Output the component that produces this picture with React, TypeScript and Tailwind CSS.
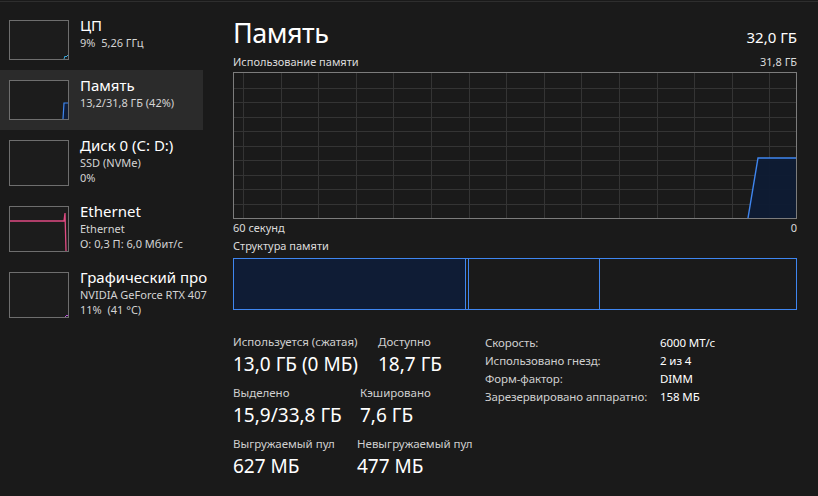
import React from 'react';

type Item = {
  title: string;
  lines: string[];
  graph: 'cpu' | 'mem' | 'disk' | 'eth' | 'gpu';
  active?: boolean;
};

const items: Item[] = [
  { title: 'ЦП', lines: ['9%  5,26 ГГц'], graph: 'cpu' },
  { title: 'Память', lines: ['13,2/31,8 ГБ (42%)'], graph: 'mem', active: true },
  { title: 'Диск 0 (C: D:)', lines: ['SSD (NVMe)', '0%'], graph: 'disk' },
  { title: 'Ethernet', lines: ['Ethernet', 'О: 0,3 П: 6,0 Мбит/с'], graph: 'eth' },
  { title: 'Графический про', lines: ['NVIDIA GeForce RTX 4070', '11%  (41 °C)'], graph: 'gpu' },
];

function MiniGraph({ kind, h }: { kind: Item['graph']; h: number }) {
  const ih = h - 2;
  return (
    <svg width="58" height={ih} className="block">
      {kind === 'cpu' && (
        <polyline points={`54,${ih} 55,${ih - 3} 56,${ih - 2} 58,${ih - 4}`} fill="none" stroke="#3aa6d8" strokeWidth="1" />
      )}
      {kind === 'mem' && (
        <>
          <polygon points={`53,${ih} 54,22 58,22 58,${ih}`} fill="#0f1d38" />
          <polyline points={`53,${ih} 54,22 58,22`} fill="none" stroke="#3f86f0" strokeWidth="1.2" />
        </>
      )}
      {kind === 'eth' && (
        <polyline points={`0,14 54,14 55,6 56,${ih}`} fill="none" stroke="#e04a82" strokeWidth="1.3" />
      )}
      {kind === 'gpu' && (
        <polyline points={`55,${ih} 57,${ih - 2} 58,${ih - 1}`} fill="none" stroke="#b555d6" strokeWidth="1" />
      )}
    </svg>
  );
}

function SideItem({ item }: { item: Item }) {
  const tall = item.lines.length > 1;
  return (
    <div
      className={`flex w-[203px] pl-[9px] py-[10px] gap-[11px] ${item.active ? 'bg-[#2b2b2b]' : ''}`}
    >
      <div
        className={`shrink-0 w-[60px] ${tall ? 'h-[46px]' : 'h-[40px]'} border border-[#6e6e6e] bg-[#1c1c1c]`}
      >
        <MiniGraph kind={item.graph} h={tall ? 46 : 40} />
      </div>
      <div className="-mt-[4px] whitespace-nowrap">
        <div className="text-[15px] leading-[19px] text-white">{item.title}</div>
        {item.lines.map((l) => (
          <div key={l} className="text-[11px] leading-[15px] text-[#d4d4d4] whitespace-pre">
            {l}
          </div>
        ))}
      </div>
    </div>
  );
}

function UsageGraph() {
  const w = 562;
  const h = 145;
  const cols = Array.from({ length: 15 }, (_, i) => 9 + i * 37.6);
  const rows = Array.from({ length: 9 }, (_, i) => 14.5 + i * 14.5);
  return (
    <div className="border border-[#7c7c7c] h-[147px]">
      <svg width={w} height={h} className="block">
        {cols.map((x) => (
          <line key={x} x1={Math.round(x) + 0.5} x2={Math.round(x) + 0.5} y1="0" y2={h} stroke="#343434" />
        ))}
        {rows.map((y) => (
          <line key={y} y1={Math.round(y) + 0.5} y2={Math.round(y) + 0.5} x1="0" x2={w} stroke="#343434" />
        ))}
        <polygon points={`514,${h} 524,85 ${w},85 ${w},${h}`} fill="#0e1b34" fillOpacity="0.95" />
        <polyline points={`514,${h} 524,85 ${w},85`} fill="none" stroke="#3f86f0" strokeWidth="1.4" />
      </svg>
    </div>
  );
}

function Stat({ label, value, w }: { label: string; value: string; w?: string }) {
  return (
    <div className={`whitespace-nowrap ${w ?? ''}`}>
      <div className="text-[11.5px] leading-[16px] text-[#cfcfcf]">{label}</div>
      <div className="mt-px text-[19px] leading-[26px] text-white">{value}</div>
    </div>
  );
}

const specs = [
  ['Скорость:', '6000 МТ/с'],
  ['Использовано гнезд:', '2 из 4'],
  ['Форм-фактор:', 'DIMM'],
  ['Зарезервировано аппаратно:', '158 МБ'],
];

export default function App() {
  return (
    <div className="w-[818px] h-[496px] overflow-hidden bg-[#1a1a1a] text-white [font-family:'Noto_Sans','DejaVu_Sans',sans-serif]">
      <div className="h-[2px] border-b border-[#2e2e2e]" />
      <div className="flex">
        {/* Sidebar */}
        <div className="w-[207px] shrink-0 overflow-hidden pt-[8px]">
          {items.map((it) => (
            <SideItem key={it.title} item={it} />
          ))}
        </div>

        {/* Main */}
        <div className="flex-1 pl-[26px] pr-[21px] pt-[14px]">
          <div className="flex items-baseline justify-between">
            <h1 className="text-[27px] leading-[34px] tracking-[-0.5px]">Память</h1>
            <span className="text-[15px]">32,0 ГБ</span>
          </div>

          <div className="mt-[5px] mb-[3px] flex justify-between text-[11px] leading-[14px] text-[#dcdcdc]">
            <span>Использование памяти</span>
            <span>31,8 ГБ</span>
          </div>
          <UsageGraph />
          <div className="mt-[2px] flex justify-between text-[11px] leading-[14px] text-[#dcdcdc]">
            <span>60 секунд</span>
            <span>0</span>
          </div>

          <div className="mt-[4px] text-[11px] leading-[14px] text-[#dcdcdc]">Структура памяти</div>
          <div className="mt-[5px] flex h-[52px] border border-[#3f86f0]">
            <div className="w-[231px] bg-[#0f1c35]" />
            <div className="w-px bg-[#3f86f0]" />
            <div className="w-[2px]" />
            <div className="w-px bg-[#3f86f0]" />
            <div className="w-[130px]" />
            <div className="w-px bg-[#3f86f0]" />
            <div className="flex-1" />
          </div>

          {/* Stats */}
          <div className="mt-[24px] flex">
            <div className="w-[252px] flex flex-col gap-[8px]">
              <div className="flex">
                <Stat label="Используется (сжатая)" value="13,0 ГБ (0 МБ)" w="w-[145px]" />
                <Stat label="Доступно" value="18,7 ГБ" />
              </div>
              <div className="flex">
                <Stat label="Выделено" value="15,9/33,8 ГБ" w="w-[127px]" />
                <Stat label="Кэшировано" value="7,6 ГБ" />
              </div>
              <div className="flex">
                <Stat label="Выгружаемый пул" value="627 МБ" w="w-[124px]" />
                <Stat label="Невыгружаемый пул" value="477 МБ" />
              </div>
            </div>
            <div className="text-[11.5px] leading-[18px] tracking-[-0.1px]">
              {specs.map(([k, v]) => (
                <div key={k} className="flex whitespace-nowrap">
                  <span className="w-[175px] text-[#cfcfcf]">{k}</span>
                  <span className="text-white">{v}</span>
                </div>
              ))}
            </div>
          </div>
        </div>
      </div>
    </div>
  );
}
